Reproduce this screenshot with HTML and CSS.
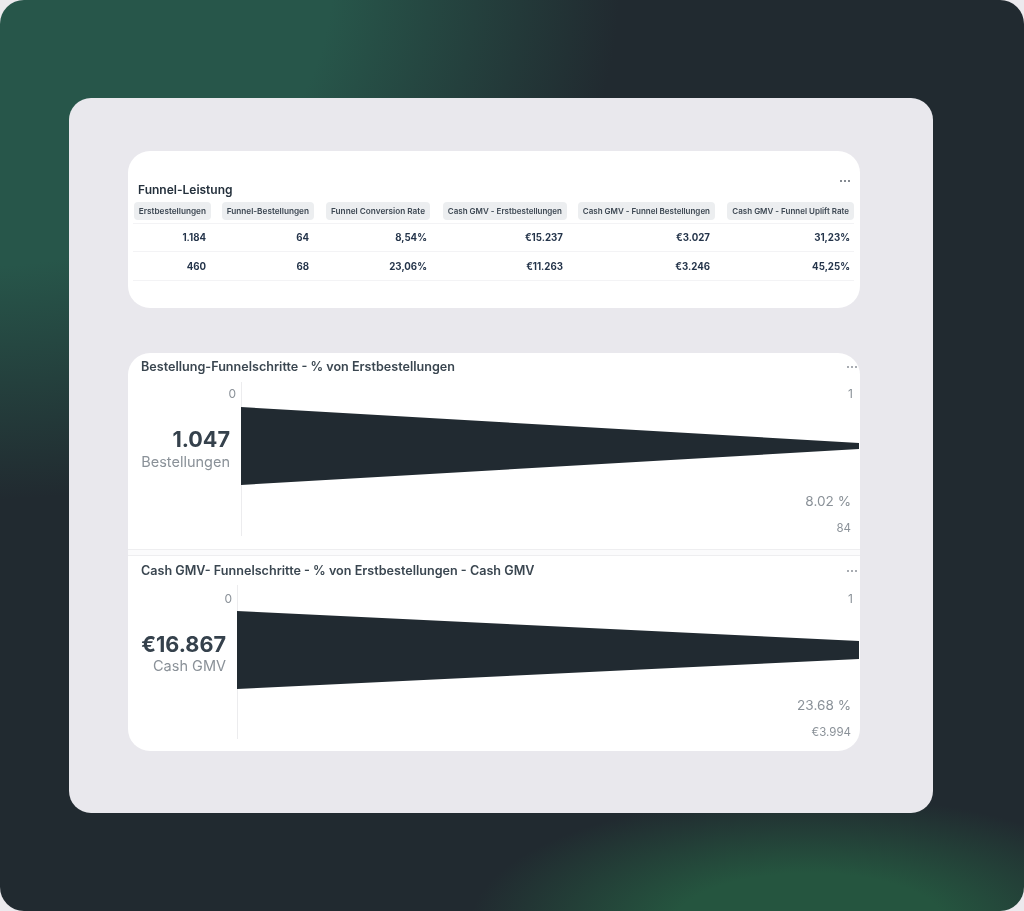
FILE: index.html
```html
<!DOCTYPE html>
<html lang="de">
<head>
<meta charset="utf-8">
<title>Funnel-Leistung</title>
<link rel="stylesheet" href="styles.css">
</head>
<body>
<main class="frame">
  <section class="panel">
    <article class="card table-card">
      <span class="dots table-dots"><i></i><i></i><i></i></span>
      <h2 class="table-title">Funnel-Leistung</h2>
      <div class="grid">
        <div class="head"><span class="pill">Erstbestellungen</span></div>
        <div class="head"><span class="pill">Funnel-Bestellungen</span></div>
        <div class="head"><span class="pill">Funnel Conversion Rate</span></div>
        <div class="head"><span class="pill long">Cash GMV - Erstbestellungen</span></div>
        <div class="head"><span class="pill long">Cash GMV - Funnel Bestellungen</span></div>
        <div class="head"><span class="pill long">Cash GMV - Funnel Uplift Rate</span></div>
        <div class="cell">1.184</div><div class="cell">64</div><div class="cell tight">8,54%</div><div class="cell mid">€15.237</div><div class="cell">€3.027</div><div class="cell mid">31,23%</div>
        <div class="cell">460</div><div class="cell">68</div><div class="cell tight">23,06%</div><div class="cell mid">€11.263</div><div class="cell">€3.246</div><div class="cell mid">45,25%</div>
      </div>
    </article>

    <div class="card funnels">
      <article class="funnel first">
        <header class="funnel-head">
          <h2>Bestellung-Funnelschritte - % von Erstbestellungen</h2>
          <span class="dots"><i></i><i></i><i></i></span>
        </header>
        <div class="funnel-body">
          <div class="metric metric-a">
            <span class="tick">0</span>
            <strong>1.047</strong>
            <span class="metric-label">Bestellungen</span>
          </div>
          <div class="plot">
            <svg class="shape" viewBox="0 0 618 78" preserveAspectRatio="none" aria-hidden="true"><polygon points="0,0 618,36 618,42 0,78"/></svg>
            <span class="tick tick-end">1</span>
            <span class="pct">8.02 %</span>
            <span class="abs">84</span>
          </div>
        </div>
      </article>
      <div class="divider"></div>
      <article class="funnel second">
        <header class="funnel-head">
          <h2>Cash GMV- Funnelschritte - % von Erstbestellungen - Cash GMV</h2>
          <span class="dots"><i></i><i></i><i></i></span>
        </header>
        <div class="funnel-body">
          <div class="metric metric-b">
            <span class="tick">0</span>
            <strong>€16.867</strong>
            <span class="metric-label">Cash GMV</span>
          </div>
          <div class="plot">
            <svg class="shape" viewBox="0 0 622 78" preserveAspectRatio="none" aria-hidden="true"><polygon points="0,0 622,30 622,48 0,78"/></svg>
            <span class="tick tick-end">1</span>
            <span class="pct">23.68 %</span>
            <span class="abs">€3.994</span>
          </div>
        </div>
      </article>
    </div>
  </section>
</main>
</body>
</html>
```

FILE: styles.css
```css
* { box-sizing: border-box; }
html, body { margin: 0; padding: 0; }
body {
  width: 1024px;
  height: 911px;
  overflow: hidden;
  background: #eceaee;
  font-family: Inter, "Liberation Sans", sans-serif;
  color: #35414c;
}
.frame {
  width: 1024px;
  height: 911px;
  border-radius: 24px;
  overflow: hidden;
  padding: 98px 91px 98px 69px;
  background:
    radial-gradient(ellipse 640px 520px at -20px -20px, #27564a 0%, #27564a 55%, rgba(39, 86, 74, 0) 100%),
    radial-gradient(ellipse 340px 130px at 810px 925px, #25553f 0%, #25553f 40%, rgba(37, 85, 63, 0) 100%),
    #212a30;
}
.panel {
  height: 715px;
  background: #e9e8ed;
  border-radius: 22px;
  padding: 53px 73px 0 59px;
  filter: blur(0.35px);
}
.card { background: #fff; }
.table-card {
  position: relative;
  height: 157px;
  border-radius: 22px;
  padding: 32px 6px 0 5px;
}
.table-title {
  margin: 0 0 5px 5px;
  font-size: 12px;
  line-height: 14px;
  font-weight: 600;
  color: #24303c;
}
.dots { display: inline-flex; gap: 2px; }
.dots i { width: 2px; height: 2px; border-radius: 50%; background: #8b9198; }
.table-dots { position: absolute; right: 10px; top: 29px; }
.table-dots i { background: #5d656e; }
.grid {
  display: grid;
  grid-template-columns: 78px 103px 116px 137px 148px 139px;
  grid-template-rows: 22px 28px 29px;
}
.head { display: flex; justify-content: flex-end; align-items: flex-start; border-bottom: 1px solid #f3f3f5; }
.pill {
  display: block;
  background: #eceef0;
  border-radius: 4px;
  padding: 0 5px;
  height: 18px;
  line-height: 18px;
  font-size: 8.22px;
  font-weight: 600;
  color: #3d4853;
  white-space: nowrap;
}
.pill.long { font-size: 8px; }
.cell {
  display: flex;
  justify-content: flex-end;
  align-items: center;
  padding-right: 5px;
  font-size: 9.7px;
  font-weight: 700;
  color: #24344a;
  border-bottom: 1px solid #f3f3f5;
}
.cell.mid { padding-right: 4px; }
.cell.tight { padding-right: 3px; }
.funnels {
  margin-top: 45px;
  height: 398px;
  border-radius: 22px;
  overflow: hidden;
}
.first { height: 197px; border-bottom: 1px solid #eeeef0; }
.divider { height: 5px; background: #fbfbfc; }
.second { height: 196px; border-top: 1px solid #eeeef0; }
.funnel-head {
  display: flex;
  justify-content: space-between;
  align-items: center;
}
.first .funnel-head { height: 29px; padding: 0 3px 2px 13px; }
.second .funnel-head { height: 29px; padding: 0 3px 0 13px; }
.funnel-head h2 {
  margin: 0;
  font-size: 12.6px;
  line-height: 15px;
  font-weight: 600;
  color: #3a4650;
}
.funnel-body { display: flex; height: 154px; }
.metric {
  display: flex;
  flex-direction: column;
  align-items: flex-end;
  flex: none;
  border-right: 1px solid #ececee;
  padding-right: 11px;
}
.metric-a { width: 114px; }
.metric-b { width: 110px; }
.metric .tick { margin: 5px -6px 0 0; }
.metric-b .tick { margin-top: 7px; }
.tick { font-size: 12px; line-height: 14px; color: #8a9198; }
.metric strong {
  margin-top: 25px;
  font-size: 21.6px;
  line-height: 26px;
  font-weight: 700;
  color: #35414c;
}
.metric-label { font-size: 14.5px; line-height: 18px; color: #8a9198; }
.metric-a .metric-label { margin-top: 1px; }
.plot { position: relative; flex: 1; }
.shape { position: absolute; left: -1px; top: 25px; width: 100%; height: 78px; display: block; fill: #212a31; }
.second .shape { top: 26px; }
.tick-end { position: absolute; right: 7px; top: 5px; }
.second .tick-end { top: 7px; }
.pct { position: absolute; right: 9px; top: 110px; font-size: 13.6px; line-height: 18px; color: #8a9198; }
.abs { position: absolute; right: 9px; top: 139px; font-size: 11.5px; line-height: 14px; color: #8a9198; }
.second .pct { top: 111px; }
.second .abs { top: 140px; }
```
